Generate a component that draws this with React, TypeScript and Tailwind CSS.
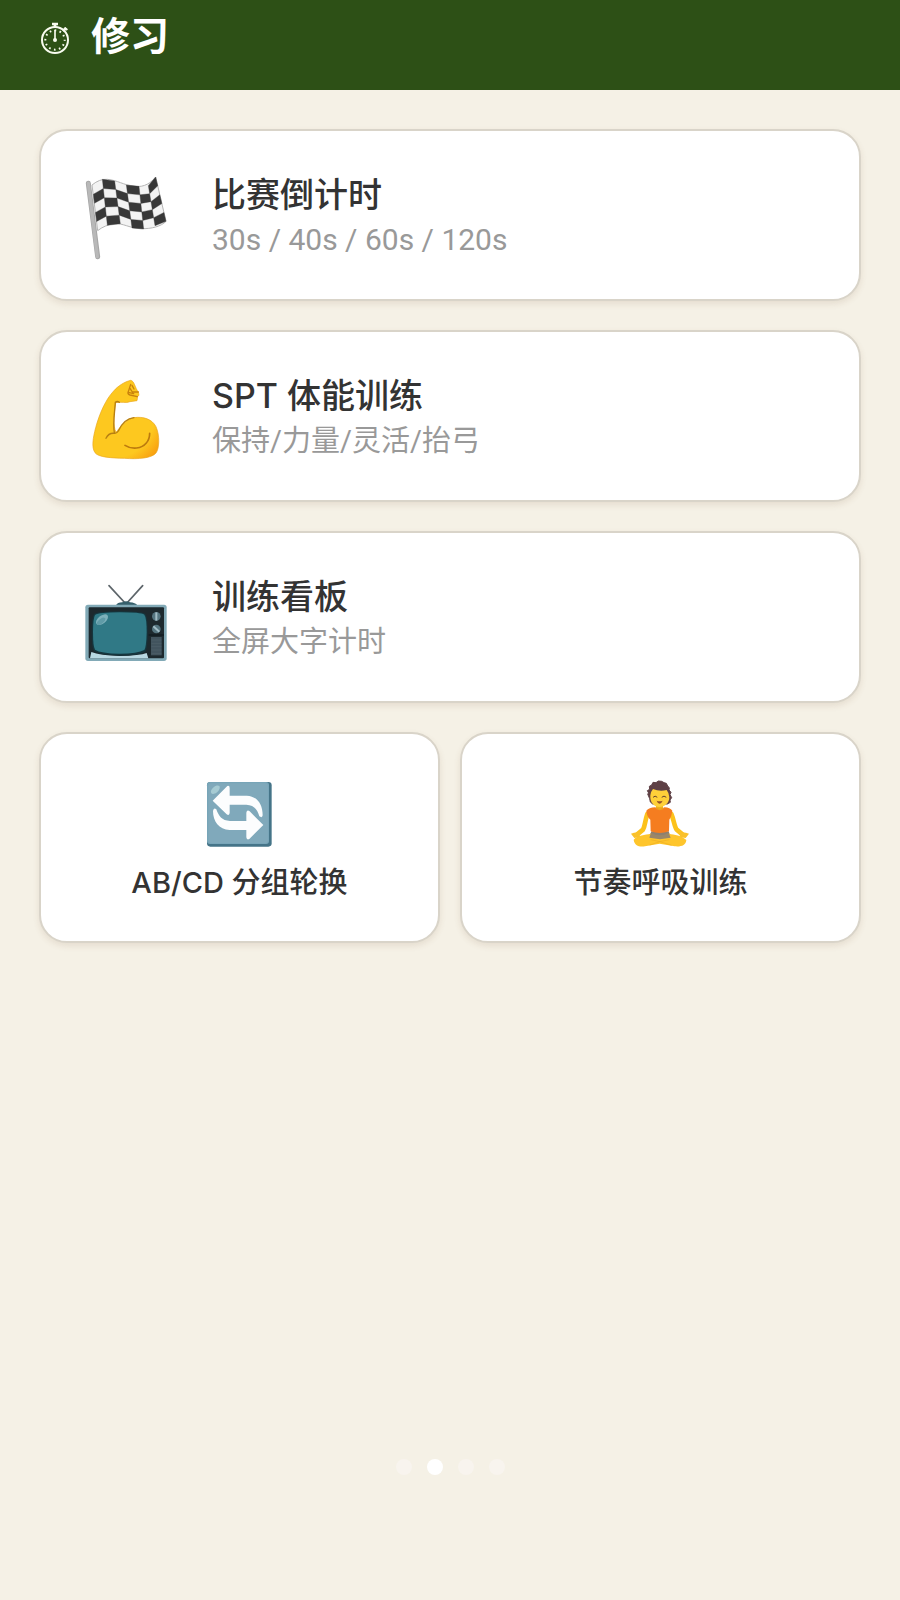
import React, { useState } from "react";
import { clsx } from "clsx";

interface Training {
  title: string;
  subtitle: string;
  latin?: boolean;
  icon: React.ComponentType<IconProps>;
}

interface IconProps {
  className?: string;
}

// Top and bottom edge of the waving cloth, one point per column line
const FLAG_TOP = [[68, 74], [98, 57], [135, 62], [170, 74], [208, 78], [236, 76], [258, 50]];
const FLAG_BOTTOM = [[84, 211], [113, 195], [152, 190], [187, 203], [222, 206], [256, 196], [289, 183]];
const FLAG_ROWS = 5;

const flagPoint = (col: number, row: number) => {
  const t = row / FLAG_ROWS;
  const x = FLAG_TOP[col][0] + (FLAG_BOTTOM[col][0] - FLAG_TOP[col][0]) * t;
  const y = FLAG_TOP[col][1] + (FLAG_BOTTOM[col][1] - FLAG_TOP[col][1]) * t;
  return `${x.toFixed(1)},${y.toFixed(1)}`;
};

const FlagIcon = ({ className }: IconProps) => {
  const cells: string[] = [];
  for (let c = 0; c < 6; c++) {
    for (let r = 0; r < FLAG_ROWS; r++) {
      if ((c + r) % 2 === 1) {
        cells.push([flagPoint(c, r), flagPoint(c + 1, r), flagPoint(c + 1, r + 1), flagPoint(c, r + 1)].join(" "));
      }
    }
  }

  return (
    <svg viewBox="43 41 252 252" className={className} aria-hidden="true">
      <path
        d="M67 74Q90 55 113 57C145 60 160 74 195 78C225 82 245 66 258 50L289 183C275 198 245 206 215 205C180 204 160 188 135 190Q105 194 84 211Z"
        fill="#f3f3f3"
        stroke="#b5b5b5"
        strokeWidth="3"
        strokeLinejoin="round"
      />
      {cells.map((points) => (
        <polygon key={points} points={points} fill="#383838" stroke="#383838" strokeWidth="1" strokeLinejoin="round" />
      ))}
      <path d="M56 69L84 289" stroke="#a6a6a6" strokeWidth="15" strokeLinecap="round" />
      <path d="M56 69L83 289" stroke="#b8b8b8" strokeWidth="10" strokeLinecap="round" />
    </svg>
  );
};

const MuscleIcon = ({ className }: IconProps) => (
  <svg viewBox="43 26 252 252" className={className} aria-hidden="true">
    <defs>
      <radialGradient id="arm" gradientUnits="userSpaceOnUse" cx="130" cy="150" r="168">
        <stop offset="0.74" stopColor="#fdc81f" />
        <stop offset="1" stopColor="#f9a010" />
      </radialGradient>
    </defs>
    <path
      d="M183 42C165 46 145 59 132 74C108 99 89 143 78 184C70 215 65 243 76 259C86 273 125 275 165 276C205 279 246 276 259 260C269 247 271 208 259 181C247 158 221 150 193 154C169 158 151 183 139 198C129 177 133 143 138 109C155 106 169 111 181 106L202 103Q204 96 203 91L208 87Q207 80 206 77C196 65 194 43 183 42Z"
      fill="url(#arm)"
      stroke="#e9a51c"
      strokeWidth="2"
      strokeLinejoin="round"
    />
    <path
      d="M109 216Q117 199 134 201Q141 202 146 194Q163 157 193 154M134 198C129 175 135 137 137 108Q143 103 149 108"
      fill="none"
      stroke="#b78012"
      strokeWidth="4"
      strokeLinecap="round"
    />
    <path d="M166 237C188 251 216 247 230 230Q240 219 240 201" fill="none" stroke="#bc7a0e" strokeWidth="5" strokeLinecap="round" />
    <path
      d="M183 54L176 76Q172 83 181 86L203 91M181 66L188 77L206 77M176 78L192 82M187 57L193 68"
      fill="none"
      stroke="#c9820c"
      strokeWidth="4"
      strokeLinecap="round"
      strokeLinejoin="round"
    />
  </svg>
);

const TvIcon = ({ className }: IconProps) => (
  <svg viewBox="43 15 252 252" className={className} aria-hidden="true">
    <path d="M118 44L169 99L219 44" fill="none" stroke="#5d656a" strokeWidth="5" strokeLinecap="round" />
    <path d="M139 103Q143 94 158 94Q169 88 181 94Q197 95 203 103Z" fill="#365f6b" />
    <rect x="47" y="101" width="244" height="169" rx="8" fill="#82aab7" />
    <rect x="57" y="109" width="226" height="153" rx="3" fill="#1d292e" />
    <path d="M61 262L65 243Q90 254 150 255Q210 254 231 246L236 262Z" fill="#b9d9e3" />
    <path d="M73 129Q86 121 150 121Q216 121 227 129Q234 137 234 184Q234 232 227 242Q205 254 150 254Q92 252 73 240Q66 230 66 184Q66 139 73 129Z" fill="#15363e" />
    <path d="M76 132Q88 124 150 124Q213 124 224 131Q231 140 231 184Q230 228 224 237Q204 248 150 248Q94 247 76 236Q70 226 70 184Q70 142 76 132Z" fill="#307986" />
    <ellipse cx="97" cy="146" rx="21" ry="12" transform="rotate(-38 97 146)" fill="#7eb1bb" />
    <ellipse cx="94" cy="151" rx="15" ry="7" transform="rotate(-38 94 151)" fill="#609ba7" />
    <circle cx="260" cy="136" r="13" fill="#557580" />
    <path d="M260 124V149" stroke="#a2bdc6" strokeWidth="6" />
    <circle cx="260" cy="174" r="13" fill="#557580" />
    <path d="M251 166L269 182" stroke="#a2bdc6" strokeWidth="6" />
    <path d="M237 192H283" stroke="#0c171a" strokeWidth="3" />
    <rect x="244" y="198" width="32" height="55" fill="#42545e" />
    <path d="M245 207H275M245 217H275M245 227H275M245 237H275M245 247H275" stroke="#4b5d66" strokeWidth="3" />
  </svg>
);

const RotateIcon = ({ className }: IconProps) => (
  <svg viewBox="42 25 216 216" className={className} aria-hidden="true">
    <rect x="51" y="37" width="194" height="194" rx="10" fill="#457488" />
    <rect x="51" y="37" width="186" height="186" rx="9" fill="#78a5b8" />
    <rect x="55" y="41" width="179" height="179" rx="9" fill="#80a9bb" />
    <ellipse cx="76" cy="60" rx="16" ry="9" transform="rotate(-42 76 60)" fill="#a6cbd3" />
    <path
      d="M68 93L112 49Q119 47 119 55V78H170C201 79 218 103 218 137Q217 146 208 140C202 119 192 106 169 105H119V130Q117 140 110 134Z"
      fill="#fcfdfe"
    />
    <path
      d="M220 166L178 208Q170 212 169 203V181H119C87 179 69 156 69 124Q71 112 79 119C86 139 95 153 120 154H169V129Q171 119 179 125Z"
      fill="#fcfdfe"
    />
  </svg>
);

const MeditationIcon = ({ className }: IconProps) => (
  <svg viewBox="47 24 216 216" className={className} aria-hidden="true">
    <path
      d="M121 86L115 72L118 69L114 62L121 58L120 49L127 45L131 37L140 38L147 33L157 34L164 38L171 40L175 48L180 53L179 60L185 67L182 74L187 83L182 90L183 97L174 102H130L123 96Z"
      fill="#5e4045"
      stroke="#5e4045"
      strokeWidth="3"
      strokeLinejoin="round"
    />
    <path d="M140 101H161V120H140Z" fill="#eeb21f" />
    <path d="M123 76Q124 65 131 57Q150 65 172 60Q180 70 180 82C180 100 165 111 151 111C135 111 121 98 123 76Z" fill="#ffd039" />
    <path d="M132 81Q137 75 143 81M158 81Q164 75 170 81" fill="none" stroke="#65432e" strokeWidth="3" strokeLinecap="round" />
    <path d="M142 92Q151 95 160 92Q156 101 151 101Q145 101 142 92Z" fill="#93512a" />
    <path d="M114 132C107 152 107 169 101 179L83 194M186 132C194 151 195 169 202 179L220 194" fill="none" stroke="#fcc21b" strokeWidth="14" strokeLinecap="round" />
    <path d="M126 184H178L187 210H116Z" fill="#8d8070" />
    <path
      d="M73 209C86 194 107 195 124 191C132 200 144 204 151 204C160 204 173 198 179 191C195 195 217 195 231 210C230 226 215 231 196 229L151 221L107 229C89 232 75 226 73 209Z"
      fill="#fec52c"
    />
    <path d="M125 188Q151 204 178 188L184 203L152 208L120 203Z" fill="#9b8769" />
    <path d="M124 209L152 215L187 226M180 209L151 215L121 225" fill="none" stroke="#eeae22" strokeWidth="2" />
    <path d="M65 191Q77 187 84 188L89 182Q94 184 92 191L90 202L75 204ZM239 191Q227 187 219 188L213 182Q208 184 210 191L213 202L229 204Z" fill="#fac12a" />
    <path d="M111 122Q119 113 137 112Q151 122 166 112Q182 113 189 122Q187 139 180 149L179 184Q151 194 124 184L123 149Q112 139 111 122Z" fill="#f57d20" />
    <path d="M137 112Q151 122 166 112Q163 119 151 121Q140 119 137 112Z" fill="#eca31f" />
  </svg>
);

const StopwatchIcon = ({ className }: IconProps) => (
  <svg viewBox="58 58 96 96" className={className} fill="none" stroke="#f8fbef" aria-hidden="true">
    <circle cx="106" cy="118" r="39" strokeWidth="6" />
    <path d="M97 70H115M106 69V80M130 91L139 82" strokeWidth="8" />
    <path d="M135 81L143 88" strokeWidth="6" />
    <path d="M106 88V118" strokeWidth="5" />
    <circle cx="106" cy="118" r="6" fill="#f8fbef" stroke="none" />
    <circle cx="106" cy="118" r="29" strokeWidth="6" strokeDasharray="5 10.184" strokeDashoffset="2" />
  </svg>
);

const TRAININGS: Training[] = [
  { title: "比赛倒计时", subtitle: "30s / 40s / 60s / 120s", latin: true, icon: FlagIcon },
  { title: "SPT 体能训练", subtitle: "保持/力量/灵活/抬弓", icon: MuscleIcon },
  { title: "训练看板", subtitle: "全屏大字计时", icon: TvIcon },
];

const TOOLS = [
  { title: "AB/CD 分组轮换", icon: RotateIcon },
  { title: "节奏呼吸训练", icon: MeditationIcon },
];

const cardStyle =
  "rounded-[28px] border-2 border-[#d9d4c9] bg-white shadow-[0_3px_6px_rgba(120,80,50,0.12)] cursor-pointer";

const App = () => {
  const [page, setPage] = useState(1);

  return (
    <div className="flex min-h-screen flex-col bg-[#f5f1e6] font-['Inter','Noto_Sans_CJK_SC',sans-serif] text-[#333333]">
      {/* --- HEADER --- */}
      <header className="flex items-center gap-5 bg-[#2d5016] px-[39px] pt-2 pb-[26px] text-white">
        <StopwatchIcon className="size-8 overflow-visible" />
        <h1 className="text-[39px] leading-[56px] font-bold">修习</h1>
      </header>

      {/* --- TRAINING LIST --- */}
      <main className="flex flex-col gap-[29px] px-[39px] pt-[39px]">
        {TRAININGS.map(({ title, subtitle, latin, icon: Icon }) => (
          <button key={title} type="button" className={clsx(cardStyle, "flex items-center gap-11 px-[43px] pt-10 pb-[39px] text-left")}>
            <Icon className="size-[84px] shrink-0 overflow-visible" />
            <span className="flex flex-col gap-px">
              <span className="text-[34px] leading-[48px] font-medium">{title}</span>
              <span
                className={clsx(
                  "font-['Roboto','Noto_Sans_CJK_SC',sans-serif] leading-10 text-[#999999]",
                  latin ? "text-[30px]" : "text-[29px]"
                )}
              >
                {subtitle}
              </span>
            </span>
          </button>
        ))}

        <div className="grid grid-cols-2 gap-5">
          {TOOLS.map(({ title, icon: Icon }) => (
            <button key={title} type="button" className={clsx(cardStyle, "flex flex-col items-center gap-[13px] px-4 pt-11 pb-[38px]")}>
              <Icon className="size-[72px]" />
              <span className="text-[29px] leading-10 font-medium">{title}</span>
            </button>
          ))}
        </div>
      </main>

      {/* --- PAGE DOTS --- */}
      <nav className="mt-auto flex justify-center gap-[15px] pt-10 pb-[125px]">
        {[0, 1, 2, 3].map((i) => (
          <button
            key={i}
            type="button"
            aria-label={`${i + 1}`}
            onClick={() => setPage(i)}
            className={clsx("size-4 rounded-full cursor-pointer", page === i ? "bg-white" : "bg-[#f8f4ee]")}
          />
        ))}
      </nav>
    </div>
  );
};

export default App;
